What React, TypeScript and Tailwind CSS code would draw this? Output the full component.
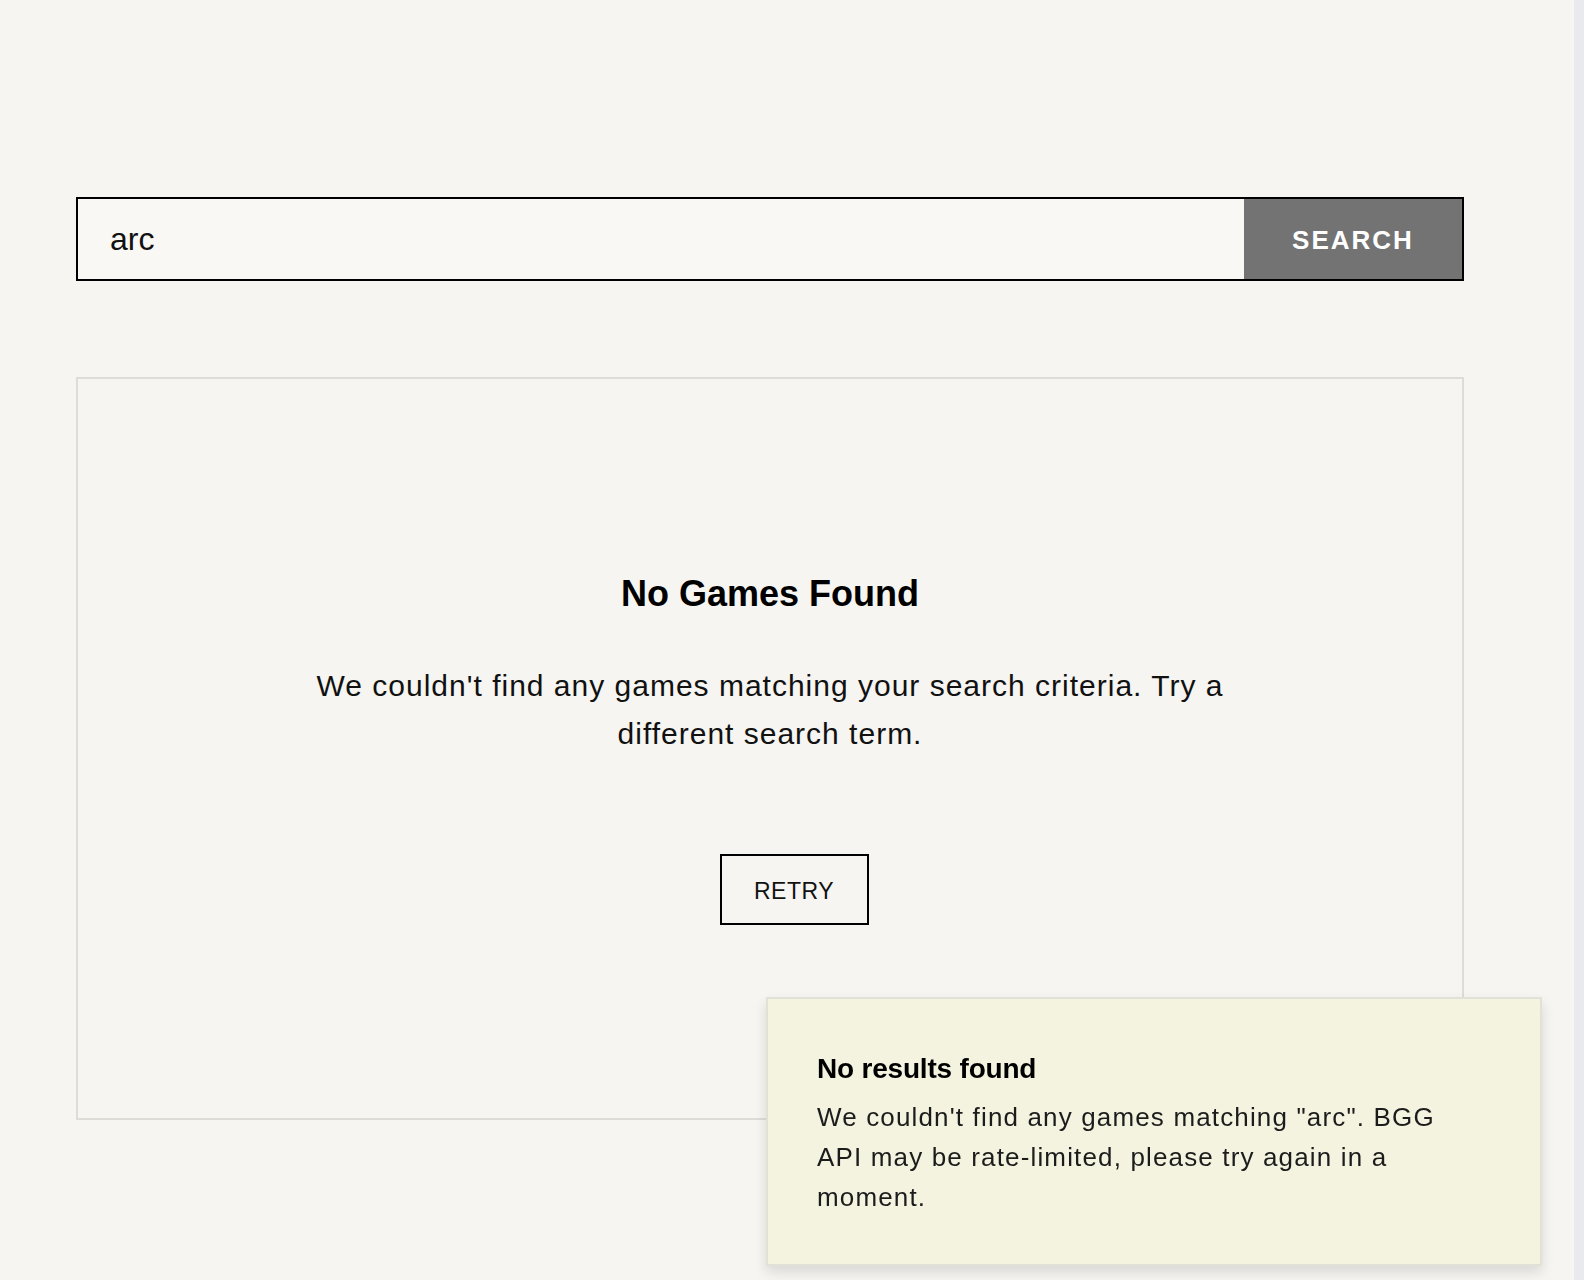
import React from "react";

export default function App() {
  const font = { fontFamily: '"Liberation Sans", Arial, Helvetica, sans-serif' };
  return (
    <div className="min-h-[1280px] w-full bg-[#f6f5f1] flex" style={font}>
      <div className="flex-1 pl-[76px] pt-[197px]">
        <div className="w-[1388px] flex flex-col gap-[96px]">
          <div className="flex h-[84px] border-2 border-black">
            <div className="flex-1 bg-[#f9f8f5] flex items-center pl-[32px] text-[32px] text-[#111]">
              arc
            </div>
            <button className="w-[218px] bg-[#737373] text-white text-[26px] font-bold tracking-[2px] flex items-center justify-center pt-[2px]">
              SEARCH
            </button>
          </div>
          <div className="border-2 border-[#dddcd7] h-[743px] flex flex-col items-center pt-[193px]">
            <h2 className="text-[36px] leading-[43px] font-bold text-black">No Games Found</h2>
            <p className="mt-[47px] max-w-[1000px] text-center text-[30px] leading-[48px] tracking-[1px] text-[#111]">
              We couldn't find any games matching your search criteria. Try a different search term.
            </p>
            <button className="mt-[96px] ml-[48px] w-[149px] h-[71px] border-2 border-black text-[23px] tracking-[0.5px] text-[#111] flex items-center justify-center pt-[3px]">
              RETRY
            </button>
          </div>
        </div>
      </div>
      <div className="w-[10px] bg-[#e9eaee]" />
      <div className="fixed left-[766px] top-[997px] w-[776px] h-[269px] bg-[#f4f3e0] border-2 border-[#e2e1d8] shadow-[0_6px_12px_rgba(0,0,0,0.12)] pl-[49px] pr-[40px] pt-[50px]">
        <div className="text-[28px] leading-[40px] font-bold tracking-[-0.2px] text-black">No results found</div>
        <div className="mt-[8px] text-[26px] leading-[40px] tracking-[1.15px] text-[#1c1c1c] max-w-[650px]">
          We couldn't find any games matching "arc". BGG API may be rate-limited, please try again in a moment.
        </div>
      </div>
    </div>
  );
}
